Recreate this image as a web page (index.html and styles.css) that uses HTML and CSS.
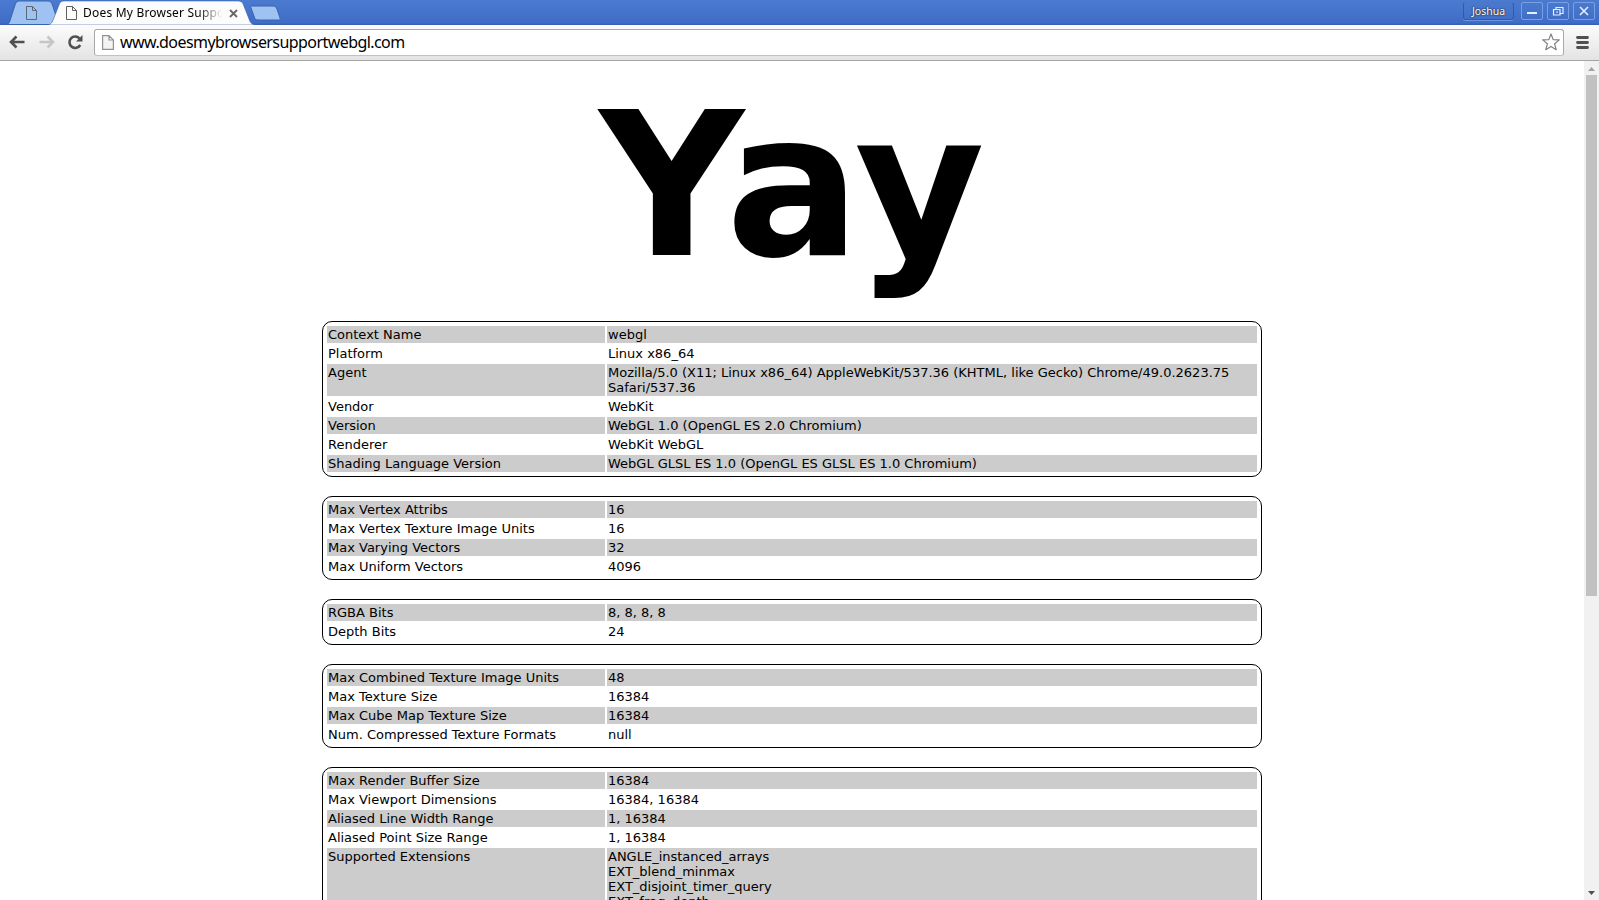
FILE: index.html
```
<!DOCTYPE html>
<html lang="en">
<head>
    <meta charset="UTF-8">
    <title>Does My Browser Support WebGL</title>
    <link rel="stylesheet" href="styles.css">
</head>
<body>

    <div class="titlebar">
        <div class="tabs">
            <div class="tab tab-pinned">
                <svg class="tab-shape" width="48" height="25" viewBox="0 0 48 25">
                    <path d="M0 24.5C2 24 2.500 22 3.500 19L8 5C9 2 10 1 12.500 1H41C43.500 1 44.500 2.500 45.500 5L50 19V24.500Z" fill="#9ec2f2" stroke="#3a62ad"/>
                </svg>
                <svg class="tab-page" width="11" height="14" viewBox="0 0 11 14">
                    <path d="M.5.5H6.500L10.500 4.500V13.500H.5ZM6.500 .5V4.500H10.500" fill="none" stroke="#5d6877"/>
                </svg>
            </div>
            <div class="tab tab-active">
                <svg class="tab-shape" width="208" height="25" viewBox="0 0 208 25">
                    <path d="M0 25C3 24.500 4.500 22 5.500 19L11 5C12 2 13 1 16 1H190C193 1 194.500 2 195.500 5L201 19C202 22 203.500 24.500 207 25Z" fill="#fcfcfc" stroke="#3a62ad" stroke-width=".6"/>
                </svg>
                <div class="tab-content">
                    <svg width="11" height="14" viewBox="0 0 11 14">
                        <path d="M.5.5H6.500L10.500 4.500V13.500H.5ZM6.500 .5V4.500H10.500" fill="none" stroke="#5f5f5f"/>
                    </svg>
                    <span class="tab-title">Does My Browser Suppo</span>
                    <svg width="9" height="9" viewBox="0 0 9 9">
                        <path d="M1 1L8 8M8 1L1 8" stroke="#666" stroke-width="1.800"/>
                    </svg>
                </div>
            </div>
            <svg class="new-tab" width="34" height="16" viewBox="0 0 34 16">
                <path d="M3 1H24C26 1 27 2 28 4L31 13C31.500 14.500 31 15 29.500 15H9C7 15 6 14 5.500 12.500L2 3C1.500 1.500 2 1 3 1Z" fill="#9ec2f2" stroke="#3a62ad"/>
            </svg>
        </div>
        <div class="window-buttons">
            <div class="user">Joshua</div>
            <div class="win-btn">
                <svg width="20" height="16" viewBox="0 0 20 16"><path d="M5 10H15" stroke="#e6eefb" stroke-width="2"/></svg>
            </div>
            <div class="win-btn">
                <svg width="20" height="16" viewBox="0 0 20 16">
                    <path d="M8 6V4.500H15V10.500H12M5.500 6.500H12V12H5.500ZM8 9H10" fill="none" stroke="#e6eefb" stroke-width="1.200"/>
                </svg>
            </div>
            <div class="win-btn">
                <svg width="20" height="16" viewBox="0 0 20 16"><path d="M6 4L14 12M14 4L6 12" stroke="#e6eefb" stroke-width="1.600"/></svg>
            </div>
        </div>
    </div>

    <div class="toolbar">
        <svg class="nav-icon" width="16" height="14" viewBox="0 0 16 14">
            <path d="M7.500 1.500L2 7L7.500 12.500M2 7H15.500" fill="none" stroke="#505050" stroke-width="2.600"/>
        </svg>
        <svg class="nav-icon" width="16" height="14" viewBox="0 0 16 14">
            <path d="M8.500 1.500L14 7L8.500 12.500M14 7H.5" fill="none" stroke="#c6c6c6" stroke-width="2.600"/>
        </svg>
        <svg class="nav-icon reload" width="16" height="16" viewBox="0 0 16 16">
            <path d="M12.500 4.500A5.700 5.700 0 1 0 13.200 11" fill="none" stroke="#505050" stroke-width="2.600"/>
            <path d="M15.500 1V7.500H9Z" fill="#505050"/>
        </svg>
        <div class="omnibox">
            <svg width="12" height="15" viewBox="0 0 12 15">
                <path d="M.6.6H7L11.400 5V14.400H.6ZM7 .6V5H11.400" fill="#f4f4f4" stroke="#929292" stroke-width="1.200"/>
            </svg>
            <span class="url">www.doesmybrowsersupportwebgl.com</span>
            <svg class="star" width="18" height="18" viewBox="0 0 18 18">
                <path d="M9 1L11.200 6.600L17.300 6.900L12.600 10.800L14.200 16.700L9 13.400L3.800 16.700L5.400 10.800L.7 6.900L6.800 6.600Z" fill="#fff" stroke="#808080" stroke-width="1.200" stroke-linejoin="round"/>
            </svg>
        </div>
        <svg class="menu" width="13" height="13" viewBox="0 0 13 13">
            <path d="M1.500 1.500H11.500M1.500 6.500H11.500M1.500 11.500H11.500" stroke="#505050" stroke-width="2.800" stroke-linecap="round"/>
        </svg>
    </div>

    <div class="viewport">
        <div class="page">
            <h1>Yay</h1>
            <table>
                <tr><td>Context Name</td><td>webgl</td></tr>
                <tr><td>Platform</td><td>Linux x86_64</td></tr>
                <tr><td>Agent</td><td>Mozilla/5.0 (X11; Linux x86_64) AppleWebKit/537.36 (KHTML, like Gecko) Chrome/49.0.2623.75 Safari/537.36</td></tr>
                <tr><td>Vendor</td><td>WebKit</td></tr>
                <tr><td>Version</td><td>WebGL 1.0 (OpenGL ES 2.0 Chromium)</td></tr>
                <tr><td>Renderer</td><td>WebKit WebGL</td></tr>
                <tr><td>Shading Language Version</td><td>WebGL GLSL ES 1.0 (OpenGL ES GLSL ES 1.0 Chromium)</td></tr>
            </table>
            <table>
                <tr><td>Max Vertex Attribs</td><td>16</td></tr>
                <tr><td>Max Vertex Texture Image Units</td><td>16</td></tr>
                <tr><td>Max Varying Vectors</td><td>32</td></tr>
                <tr><td>Max Uniform Vectors</td><td>4096</td></tr>
            </table>
            <table>
                <tr><td>RGBA Bits</td><td>8, 8, 8, 8</td></tr>
                <tr><td>Depth Bits</td><td>24</td></tr>
            </table>
            <table>
                <tr><td>Max Combined Texture Image Units</td><td>48</td></tr>
                <tr><td>Max Texture Size</td><td>16384</td></tr>
                <tr><td>Max Cube Map Texture Size</td><td>16384</td></tr>
                <tr><td>Num. Compressed Texture Formats</td><td>null</td></tr>
            </table>
            <table>
                <tr><td>Max Render Buffer Size</td><td>16384</td></tr>
                <tr><td>Max Viewport Dimensions</td><td>16384, 16384</td></tr>
                <tr><td>Aliased Line Width Range</td><td>1, 16384</td></tr>
                <tr><td>Aliased Point Size Range</td><td>1, 16384</td></tr>
                <tr><td>Supported Extensions</td><td>ANGLE_instanced_arrays<br>EXT_blend_minmax<br>EXT_disjoint_timer_query<br>EXT_frag_depth</td></tr>
            </table>
        </div>
        <div class="scrollbar">
            <svg width="15" height="14" viewBox="0 0 15 14"><path d="M4 10L7.500 6L11 10Z" fill="#a3a3a3"/></svg>
            <div class="thumb"></div>
            <svg class="scroll-down" width="15" height="14" viewBox="0 0 15 14"><path d="M4 5L7.500 9L11 5Z" fill="#505050"/></svg>
        </div>
    </div>

</body>
</html>
```
FILE: styles.css
```
* {
    box-sizing: border-box;
}

body {
    margin: 0;
    height: 100vh;
    display: flex;
    flex-direction: column;
    overflow: hidden;
    background: #fff;
    color: #000;
    font-family: "DejaVu Sans", sans-serif;
    font-size: 13px;
}

svg {
    display: block;
    flex: none;
}

/* window title bar */
.titlebar {
    height: 25px;
    flex: none;
    display: flex;
    justify-content: space-between;
    background: linear-gradient(#4b7bd0, #3f6dc7 90%, #355fb0);
}

.tabs {
    display: flex;
    padding-left: 7px;
}

.tab {
    display: grid;
    height: 25px;
}

.tab > * {
    grid-area: 1 / 1;
}

.tab-page {
    margin: 6px 0 0 19px;
}

.tab-active {
    margin-left: -7px;
    z-index: 1;
}

.tab-content {
    display: flex;
    align-items: center;
    padding: 1px 0 0 18px;
}

.tab-title {
    width: 139px;
    margin: 0 7px 0 6px;
    overflow: hidden;
    white-space: nowrap;
    font-family: "Noto Sans", sans-serif;
    font-size: 12px;
    letter-spacing: 0.2px;
    line-height: 18px;
    -webkit-mask-image: linear-gradient(90deg, #000 115px, transparent 139px);
    mask-image: linear-gradient(90deg, #000 115px, transparent 139px);
}

.new-tab {
    margin: 5px 0 0 -7px;
}

.window-buttons {
    display: flex;
    gap: 4px;
    padding: 2px 4px 0 0;
}

.user {
    width: 51px;
    height: 18px;
    margin-right: 3px;
    border: 1px solid #3159a8;
    border-top-color: #4978c9;
    border-radius: 3px;
    box-shadow: 0 1px 0 #6b96df;
    color: #fff;
    font-family: "Noto Sans", sans-serif;
    font-size: 10.500px;
    line-height: 17px;
    text-align: center;
    text-shadow: 0 0 2px #222, 0 0 1px #222;
}

.win-btn {
    width: 22px;
    height: 18px;
    border: 1px solid #79a0e2;
    border-radius: 2px;
}

/* navigation */
.toolbar {
    height: 36px;
    flex: none;
    display: flex;
    align-items: center;
    padding: 0 10px 1px 9px;
    background: linear-gradient(#fcfcfc, #e3e3e3);
    border-bottom: 1px solid #a5a5a5;
}

.nav-icon {
    margin-right: 14px;
}

.nav-icon.reload {
    margin: 0 11px 0 -2px;
}

.omnibox {
    flex: 1;
    height: 27px;
    display: flex;
    align-items: center;
    padding: 0 3px 0 7px;
    background: #fff;
    border: 1px solid #a9a9a9;
    border-bottom-color: #c2c2c2;
    border-radius: 3px;
}

.url {
    margin-left: 6px;
    font-family: "Noto Sans", sans-serif;
    font-size: 16px;
    letter-spacing: -0.570px;
    line-height: 22px;
}

.star {
    margin-left: auto;
}

.menu {
    margin-left: 12px;
}

/* page */
.viewport {
    flex: 1;
    min-height: 0;
    display: flex;
}

.page {
    flex: 1;
    overflow: hidden;
}

h1 {
    margin: 8px 0 19px;
    font-size: 200px;
    line-height: 233px;
    text-align: center;
}

table {
    width: 940px;
    margin: 0 auto 19px;
    padding: 2px;
    table-layout: fixed;
    border: 1px solid #000;
    border-radius: 10px;
    border-spacing: 2px;
}

td {
    padding: 1px;
    line-height: 15px;
    vertical-align: top;
}

td:first-child {
    width: 278px;
}

tr:nth-child(odd) td {
    background: #ccc;
}

.scrollbar {
    width: 15px;
    display: flex;
    flex-direction: column;
    background: #f1f1f1;
}

.thumb {
    width: 11px;
    height: 521px;
    margin-left: 2px;
    background: #c1c1c1;
}

.scroll-down {
    margin-top: auto;
}
```
